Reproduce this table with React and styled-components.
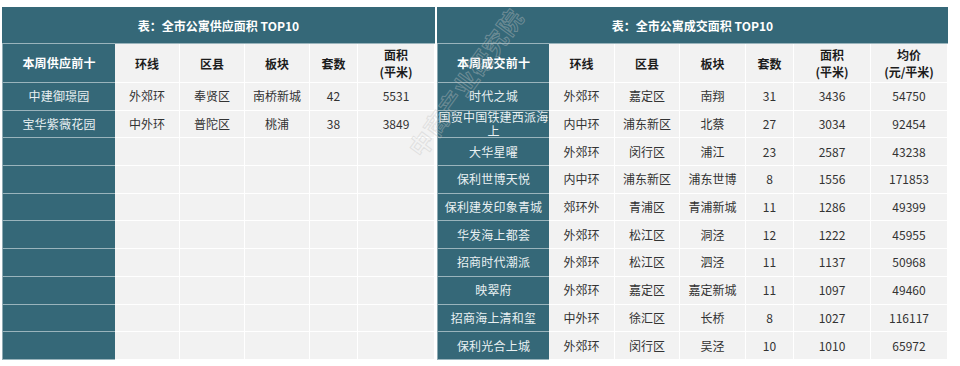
import React from "react";
import styled, { createGlobalStyle } from "styled-components";

const Global = createGlobalStyle`
  html, body { margin: 0; padding: 0; background: #ffffff; }
  body { font-family: "Noto Sans CJK SC", "Noto Sans", sans-serif; }
`;

const TEAL = "#356878";

const Page = styled.div`
  position: relative;
  width: 960px;
  height: 366px;
  overflow: hidden;
  display: flex;
  align-items: flex-start;
  gap: 2px;
  padding: 7px 0 0 2px;
  box-sizing: border-box;
`;

const Grid = styled.div`
  display: grid;
  grid-template-columns: ${(p) => p.$cols};
  grid-template-rows: 37px 39px repeat(10, 27.7px);
  background: #f2f2f2;
`;

const Title = styled.div`
  grid-column: 1 / -1;
  background: ${TEAL};
  color: #ffffff;
  font-weight: 700;
  font-size: 12px;
  display: flex;
  align-items: center;
  justify-content: center;
  border-bottom: 1px solid #9ab4bc;
  box-sizing: border-box;
`;

const Cell = styled.div`
  display: flex;
  align-items: center;
  justify-content: center;
  text-align: center;
  font-size: 12px;
  line-height: ${(p) => (p.$bold ? "17px" : "14px")};
  box-sizing: border-box;
  overflow: visible;
  white-space: ${(p) => (p.$wrap ? "normal" : "nowrap")};
  border-bottom: 1px solid #ffffff;
  border-right: 1px solid #ffffff;
  color: #333333;
  font-weight: ${(p) => (p.$bold ? 700 : 400)};
  ${(p) => p.$bold && "color: #1c1c1c;"}
`;

const DarkCell = styled(Cell)`
  background: ${TEAL};
  color: #e9f0f2;
  border-right: none;
  border-bottom: 1px solid #9ab4bc;
  border-left: 1px solid #8eaab3;
  line-height: 14px;
  letter-spacing: 0.2px;
  ${(p) => p.$bold && "color: #ffffff;"}
`;

const Watermark = styled.div`
  position: absolute;
  left: 465px;
  top: 82px;
  transform: translate(-50%, -50%) rotate(-54deg);
  font-size: 24px;
  font-weight: 700;
  letter-spacing: 1px;
  color: transparent;
  -webkit-text-stroke: 1px rgba(195, 195, 195, 0.4);
  white-space: nowrap;
  pointer-events: none;
`;

const supplyHead = ["环线", "区县", "板块", "套数", ["面积", "(平米)"]];
const dealHead = ["环线", "区县", "板块", "套数", ["面积", "(平米)"], ["均价", "(元/平米)"]];

const supplyRows = [
  ["中建御璟园", "外郊环", "奉贤区", "南桥新城", "42", "5531"],
  ["宝华紫薇花园", "中外环", "普陀区", "桃浦", "38", "3849"],
];

const dealRows = [
  ["时代之城", "外郊环", "嘉定区", "南翔", "31", "3436", "54750"],
  ["国贸中国铁建西派海上", "内中环", "浦东新区", "北蔡", "27", "3034", "92454"],
  ["大华星曜", "外郊环", "闵行区", "浦江", "23", "2587", "43238"],
  ["保利世博天悦", "内中环", "浦东新区", "浦东世博", "8", "1556", "171853"],
  ["保利建发印象青城", "郊环外", "青浦区", "青浦新城", "11", "1286", "49399"],
  ["华发海上都荟", "外郊环", "松江区", "洞泾", "12", "1222", "45955"],
  ["招商时代潮派", "外郊环", "松江区", "泗泾", "11", "1137", "50968"],
  ["映翠府", "外郊环", "嘉定区", "嘉定新城", "11", "1097", "49460"],
  ["招商海上清和玺", "中外环", "徐汇区", "长桥", "8", "1027", "116117"],
  ["保利光合上城", "外郊环", "闵行区", "吴泾", "10", "1010", "65972"],
];

function HeadText({ v }) {
  if (Array.isArray(v)) {
    return (
      <span>
        {v[0]}
        <br />
        {v[1]}
      </span>
    );
  }
  return v;
}

function Table({ cols, title, firstHead, head, rows, ncols }) {
  const filled = [];
  for (let i = 0; i < 10; i++) {
    filled.push(rows[i] || Array(ncols).fill(""));
  }
  return (
    <Grid $cols={cols}>
      <Title>{title}</Title>
      <DarkCell $bold>{firstHead}</DarkCell>
      {head.map((h, i) => (
        <Cell key={i} $bold>
          <HeadText v={h} />
        </Cell>
      ))}
      {filled.map((r, ri) =>
        r.map((c, ci) =>
          ci === 0 ? (
            <DarkCell key={ri + "-" + ci} $wrap>
              {c}
            </DarkCell>
          ) : (
            <Cell key={ri + "-" + ci}>{c}</Cell>
          )
        )
      )}
    </Grid>
  );
}

export default function App() {
  return (
    <>
      <Global />
      <Page>
        <Table
          cols="113px 65px 65px 65px 48px 77px"
          title="表：全市公寓供应面积 TOP10"
          firstHead="本周供应前十"
          head={supplyHead}
          rows={supplyRows}
          ncols={6}
        />
        <Table
          cols="112px 66px 65px 66px 48px 77px 77px"
          title="表：全市公寓成交面积 TOP10"
          firstHead="本周成交前十"
          head={dealHead}
          rows={dealRows}
          ncols={7}
        />
        <Watermark>中商产业研究院</Watermark>
      </Page>
    </>
  );
}
